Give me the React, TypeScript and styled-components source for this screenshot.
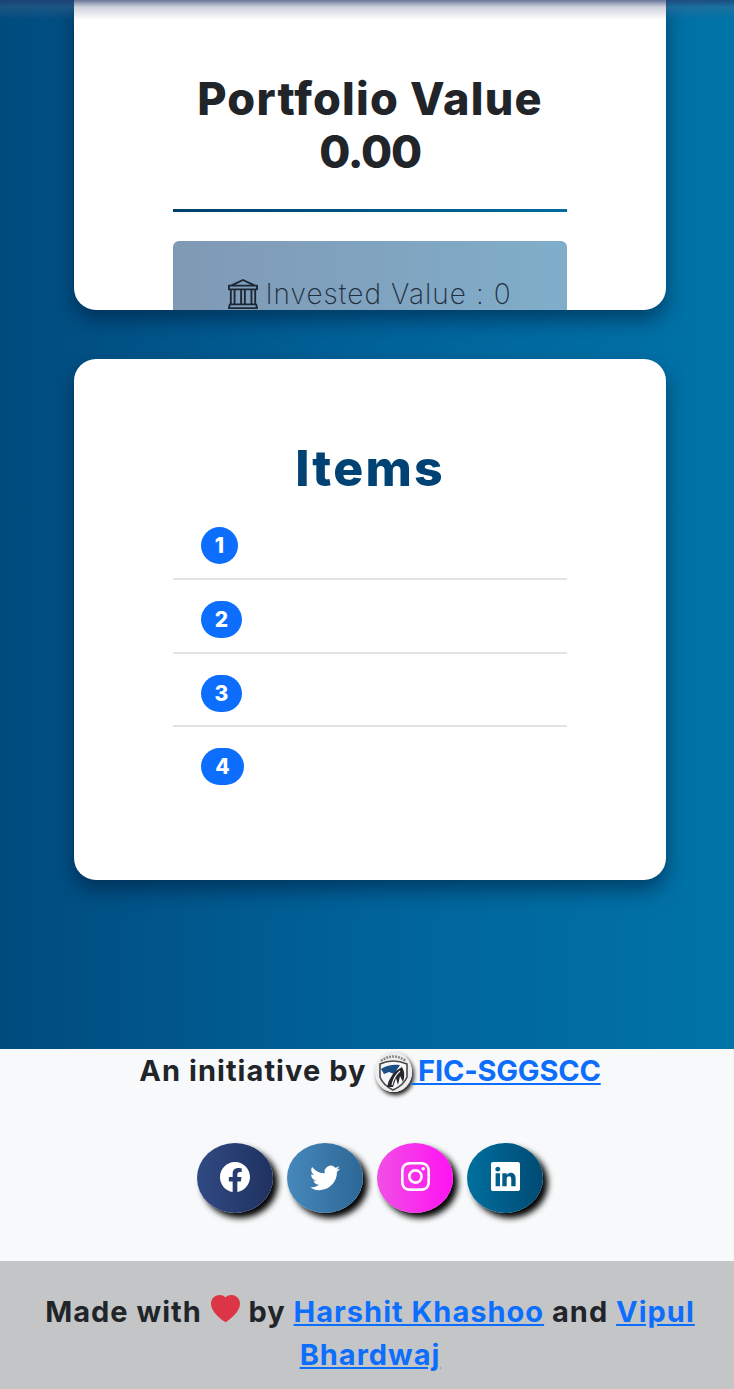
import React from "react";
import styled, { createGlobalStyle } from "styled-components";
import { BsBank, BsFacebook, BsTwitter, BsInstagram, BsLinkedin, BsHeartFill } from "react-icons/bs";

const Global = createGlobalStyle`
  html, body { margin: 0; padding: 0; }
  body { font-family: Inter, "Liberation Sans", sans-serif; color: #212529; background: #f8f9fa; }
  * { box-sizing: border-box; }
`;

const Page = styled.div`
  position: relative;
  width: 734px;
  height: 1389px;
  overflow: hidden;
`;

const Sheet = styled.div`
  width: 740px;
`;

const TopShade = styled.div`
  position: absolute;
  top: 0;
  left: 0;
  right: 0;
  height: 20px;
  background: linear-gradient(180deg, rgba(40, 60, 110, 0.7), rgba(90, 105, 140, 0.3) 35%, rgba(255, 255, 255, 0));
`;

const Main = styled.main`
  height: 1049px;
  background: linear-gradient(90deg, #004b7e 0%, #00639a 50%, #0074a8 100%);
  display: flex;
  flex-direction: column;
  align-items: center;
  gap: 49px;
`;

const Card = styled.section<{ $height: number; $clipped?: boolean }>`
  width: 592px;
  height: ${(p) => p.$height}px;
  background: #fff;
  border-radius: ${(p) => (p.$clipped ? "0 0 22px 22px" : "22px")};
  box-shadow: 0 10px 20px rgba(0, 20, 50, 0.5);
  overflow: hidden;
  padding: 0 99px;
  display: flex;
  flex-direction: column;
`;

const ValueTitle = styled.h1`
  margin: 72px 0 0;
  font-size: 45px;
  line-height: 53px;
  font-weight: 800;
  letter-spacing: 1.2px;
  text-align: center;
  color: #212529;
`;

const ValueAmount = styled.span`
  letter-spacing: -1.2px;
`;

const Divider = styled.div`
  margin-top: 31px;
  height: 3px;
  flex: none;
  background: linear-gradient(90deg, #003f6c, #006c9e);
`;

const Invested = styled.div`
  margin-top: 29px;
  height: 100px;
  flex: none;
  border-radius: 6px;
  background: linear-gradient(90deg, #8099b5, #80aeca);
  padding-top: 34px;
  display: flex;
  justify-content: center;
  align-items: flex-start;
  gap: 7px;
  font-size: 28px;
  line-height: 38px;
  font-weight: 200;
  letter-spacing: 1.05px;
  color: #1f2f40;
  svg { margin-top: 4px; flex: none; color: #1c2836; }
`;

const ItemsTitle = styled.h2`
  margin: 80px 0 0;
  font-size: 50px;
  line-height: 58px;
  font-weight: 800;
  letter-spacing: 2.2px;
  text-align: center;
  color: #004274;
`;

const List = styled.ul`
  list-style: none;
  margin: 10px 0 0;
  padding: 0;
`;

const Row = styled.li`
  height: 73.5px;
  padding: 21px 0 0 28px;
  border-bottom: 2px solid #e1e3e6;
  &:first-child { height: 73px; padding-top: 20px; }
  &:last-child { border-bottom: 0; }
`;

const Badge = styled.span<{ $width: number }>`
  display: flex;
  align-items: center;
  justify-content: center;
  width: ${(p) => p.$width}px;
  height: 37px;
  border-radius: 19px;
  background: #0d6efd;
  color: #fff;
  font-size: 21px;
  font-weight: 800;
`;

const Footer = styled.footer`
  height: 212px;
  background: #f8f9fa;
  display: flex;
  flex-direction: column;
  align-items: center;
`;

const Initiative = styled.p`
  margin: -1px 0 0;
  height: 44px;
  display: flex;
  align-items: center;
  font-size: 29px;
  font-weight: 700;
  white-space: pre;
  letter-spacing: 1.05px;
  color: #212529;
`;

const OrgLink = styled.a`
  display: flex;
  align-items: center;
  color: #0d6efd;
  text-decoration: underline;
  letter-spacing: -0.2px;
`;

const Logo = styled.svg`
  width: 37px;
  height: 40px;
  border-radius: 50%;
  margin-left: 9px;
  margin-right: -1px;
  margin-top: 3px;
  box-shadow: 2px 3px 4px rgba(0, 0, 0, 0.9);
  flex: none;
`;

const Socials = styled.div`
  display: flex;
  gap: 14px;
  margin-top: 51px;
`;

const Social = styled.a<{ $from: string; $to: string }>`
  width: 76px;
  height: 70px;
  border-radius: 50%;
  display: flex;
  align-items: center;
  justify-content: center;
  color: #fff;
  padding-bottom: 3px;
  background: linear-gradient(90deg, ${(p) => p.$from}, ${(p) => p.$to});
  box-shadow: 5px 5px 6px #000;
`;

const Credits = styled.div`
  height: 128px;
  background: #c4c5c7;
  padding: 29px 30px 0;
  text-align: center;
  font-size: 29px;
  line-height: 43px;
  font-weight: 650;
  letter-spacing: 1px;
  color: #212529;
  a { color: #0d6efd; text-decoration: underline; }
  svg { color: #dc3545; margin: 0 1px; vertical-align: -2px; }
`;

export default function App() {
  return (
    <Page>
      <Global />
      <Sheet>
        <Main>
          <Card $height={310} $clipped>
            <ValueTitle>Portfolio Value<br /><ValueAmount>0.00</ValueAmount></ValueTitle>
            <Divider />
            <Invested>
              <BsBank size={30} />
              <span>Invested Value : 0</span>
            </Invested>
          </Card>
          <Card $height={521}>
            <ItemsTitle>Items</ItemsTitle>
            <List>
              <Row><Badge $width={37}>1</Badge></Row>
              <Row><Badge $width={41}>2</Badge></Row>
              <Row><Badge $width={41}>3</Badge></Row>
              <Row><Badge $width={43}>4</Badge></Row>
            </List>
          </Card>
        </Main>
        <Footer>
          <Initiative>
            An initiative by
            <OrgLink href="#">
              <Logo viewBox="0 0 37 40">
                <rect width="37" height="40" fill="#ececec" />
                <path d="M6 9 Q18 0 31 9" fill="none" stroke="#8a8a8a" strokeWidth="2.5" strokeDasharray="2 1" />
                <path d="M5 12 Q18 6 32 12 L32 25 Q29 33 18 38 Q8 33 5 25 Z" fill="#f7f7f7" stroke="#4a4a4a" strokeWidth="1.6" />
                <path d="M6 17 Q14 12 25 13 L19 22 L14 20 L9 22 Z" fill="#1b4d86" />
                <path d="M12 35 Q15 21 27 15 Q31 22 28 30 L25 24 L23 33 L21 26 L18 35 Z" fill="#23262a" />
                <path d="M17 33 Q19 24 25 19" fill="none" stroke="#f2f2f2" strokeWidth="1.2" />
              </Logo>
              <span> FIC-SGGSCC</span>
            </OrgLink>
          </Initiative>
          <Socials>
            <Social href="#" $from="#304a82" $to="#1f3160"><BsFacebook size={30} /></Social>
            <Social href="#" $from="#4688bb" $to="#2c6796"><BsTwitter size={30} /></Social>
            <Social href="#" $from="#f04fe6" $to="#ff12f2"><BsInstagram size={29} /></Social>
            <Social href="#" $from="#00709f" $to="#004a72"><BsLinkedin size={29} /></Social>
          </Socials>
        </Footer>
        <Credits>
          Made with <BsHeartFill size={29} /> by <a href="#">Harshit Khashoo</a> and <a href="#">Vipul Bhardwaj</a>
        </Credits>
      </Sheet>
      <TopShade />
    </Page>
  );
}
